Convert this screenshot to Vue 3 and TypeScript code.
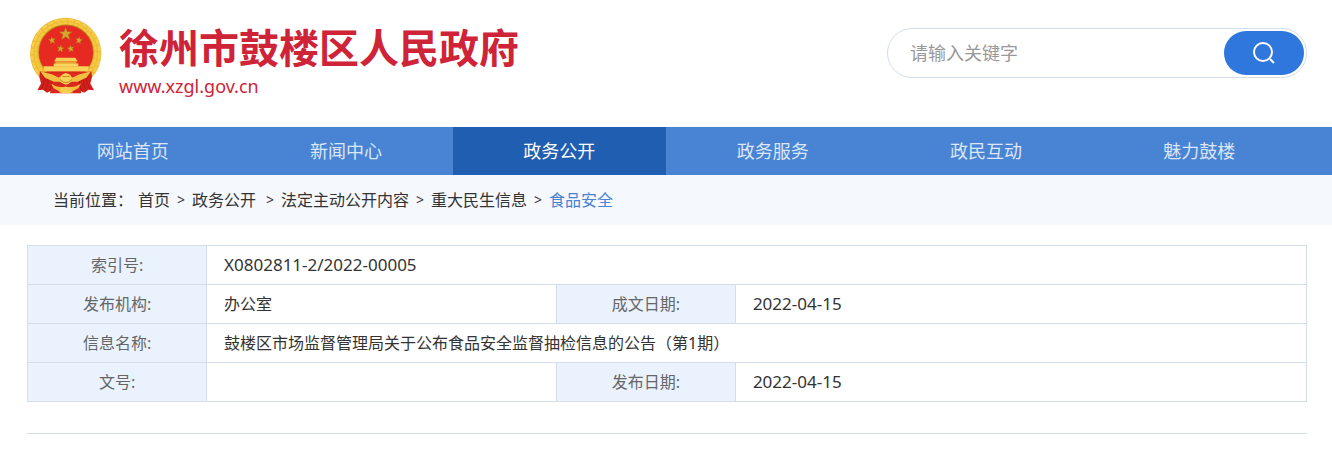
<script setup lang="ts">
import { ref } from 'vue'

interface NavItem {
  label: string
  active?: boolean
}

interface Crumb {
  label: string
  wide?: boolean
  current?: boolean
}

const keyword = ref('')

const navItems: NavItem[] = [
  { label: '网站首页' },
  { label: '新闻中心' },
  { label: '政务公开', active: true },
  { label: '政务服务' },
  { label: '政民互动' },
  { label: '魅力鼓楼' },
]

const crumbs: Crumb[] = [
  { label: '首页' },
  { label: '政务公开', wide: true },
  { label: '法定主动公开内容' },
  { label: '重大民生信息' },
  { label: '食品安全', current: true },
]
</script>

<template>
  <div class="page">
    <header class="header">
      <a class="brand" href="#">
        <svg class="emblem" viewBox="27 21 219 228" aria-hidden="true">
          <circle cx="137" cy="129" r="107" fill="#edbb35" />
          <circle cx="137" cy="129" r="101" fill="none" stroke="#f7ce48" stroke-width="7" stroke-dasharray="17 4" />
          <circle cx="137" cy="128" r="90" fill="none" stroke="#f5c942" stroke-width="7" stroke-dasharray="13 3" />
          <circle cx="138" cy="125" r="83" fill="#bd7f1e" />
          <circle cx="138" cy="126" r="81" fill="#e62a22" />
          <g fill="#d9a62c" stroke="#9d6416" stroke-width="1">
            <path d="M137 50l5 14h15l-12 9 5 15-13-9-13 9 5-15-12-9h15z" />
            <path d="M95 78l3 7 8-1-5 6 4 8-8-3-6 5 1-8-7-5 8-1z" />
            <path d="M178 78l-3 7-8-1 5 6-4 8 8-3 6 5-1-8 7-5-8-1z" />
            <path d="M123 103l-3 7-8-1 5 6-4 8 8-3 6 5-1-8 7-5-8-1z" />
            <path d="M151 103l3 7 8-1-5 6 4 8-8-3-6 5 1-8-7-5 8-1z" />
          </g>
          <path d="M109 142h57l7 11h-71z" fill="#f7cf55" />
          <path d="M106 153h63v7h-63z" fill="#e6a62d" />
          <path d="M101 159h74v9h-74z" fill="#f9d65d" />
          <path d="M70 167h137l-5 16H74z" fill="#f9d359" />
          <path d="M66 184h144v5H66z" fill="#d42a1d" />
          <path d="M60 182l27 7 29 11-8 48-15-7-12 6-12-9-17 1 11-20-5-20z" fill="#d3201b" />
          <path d="M214 182l-27 7-29 11 8 48 15-7 12 6 12-9 17 1-11-20 5-20z" fill="#d3201b" />
          <path d="M100 199h74l10 49h-94z" fill="#d9261e" />
          <g fill="none" stroke="#a31419" stroke-width="2">
            <path d="M69 193l6 17-10 25M83 198l1 20-9 23M97 204l-2 20-6 18" />
            <path d="M205 193l-6 17 10 25M191 198l-1 20 9 23M177 204l2 20 6 18" />
          </g>
          <path d="M61 182l36 10 19 9 21-13 21 13 19-9 36-10-13 19-27 13-17 0-19 8-19-8-17 0-27-13z" fill="#f0c040" />
          <circle cx="138" cy="205" r="17" fill="#f8d157" />
          <path d="M120 207q18 19 36 0M127 198h22" fill="none" stroke="#c48a25" stroke-width="3" />
          <path d="M93 219q20 15 45 9q25 6 45-9l-8 14-17 9-20-4-20 4-17-9z" fill="#f0bd3b" />
          <path d="M117 245l9-14h24l9 14q-21 6-42 0z" fill="#f6cc50" />
        </svg>
        <span class="brand-text">
          <strong class="brand-name">徐州市鼓楼区人民政府</strong>
          <span class="brand-url">www.xzgl.gov.cn</span>
        </span>
      </a>
      <form class="search" role="search" @submit.prevent>
        <input v-model="keyword" class="search-input" type="text" placeholder="请输入关键字" aria-label="请输入关键字" />
        <button class="search-button" type="submit" aria-label="搜索">
          <svg class="search-icon" viewBox="0 0 24 24" aria-hidden="true">
            <circle cx="11" cy="11" r="9" />
            <path d="M18 18l4 4" />
          </svg>
        </button>
      </form>
    </header>

    <nav class="nav">
      <div class="nav-list">
        <a
          v-for="item in navItems"
          :key="item.label"
          href="#"
          class="nav-link"
          :class="{ active: item.active }"
        >{{ item.label }}</a>
      </div>
    </nav>

    <div class="crumbs">
      <span class="crumbs-label">当前位置：</span>
      <template v-for="(crumb, i) in crumbs" :key="crumb.label">
        <a href="#" class="crumb" :class="{ current: crumb.current, wide: crumb.wide }">{{ crumb.label }}</a>
        <span v-if="i < crumbs.length - 1" class="separator">&gt;</span>
      </template>
    </div>

    <main class="content">
      <table class="info">
        <colgroup>
          <col class="col-label" />
          <col class="col-value" />
          <col class="col-label" />
          <col />
        </colgroup>
        <tbody>
          <tr>
            <th scope="row">索引号:</th>
            <td colspan="3" class="number">X0802811-2/2022-00005</td>
          </tr>
          <tr>
            <th scope="row">发布机构:</th>
            <td>办公室</td>
            <th scope="row">成文日期:</th>
            <td class="number">2022-04-15</td>
          </tr>
          <tr>
            <th scope="row">信息名称:</th>
            <td colspan="3">鼓楼区市场监督管理局关于公布食品安全监督抽检信息的公告（第1期）</td>
          </tr>
          <tr>
            <th scope="row">文号:</th>
            <td></td>
            <th scope="row">发布日期:</th>
            <td class="number">2022-04-15</td>
          </tr>
        </tbody>
      </table>
      <hr class="rule" />
    </main>
  </div>
</template>

<style>
body {
  margin: 0;
  background: #fff;
}
</style>

<style scoped>
.page {
  font-family: "Noto Sans", "Noto Sans CJK SC", sans-serif;
  font-size: 16px;
  line-height: 24px;
  color: #333;
}

a {
  color: inherit;
  text-decoration: none;
}

.header {
  display: flex;
  justify-content: space-between;
  align-items: flex-start;
  box-sizing: border-box;
  height: 127px;
  padding: 17px 25px 0 29px;
}

.brand {
  display: flex;
  gap: 17px;
  color: #cf2337;
}

.emblem {
  width: 73px;
  height: 77px;
}

.brand-text {
  display: flex;
  flex-direction: column;
  padding-top: 8px;
}

.brand-name {
  font-family: "Liberation Sans", "Noto Sans CJK SC", sans-serif;
  font-size: 40px;
  line-height: 48px;
  font-weight: 700;
}

.brand-url {
  font-size: 18px;
  line-height: 26px;
}

.search {
  display: flex;
  box-sizing: border-box;
  width: 420px;
  height: 50px;
  margin-top: 11px;
  padding: 2px;
  border: 1px solid #d3dee9;
  border-radius: 25px;
}

.search-input {
  flex: 1;
  min-width: 0;
  padding: 0 20px;
  border: 0;
  outline: 0;
  background: transparent;
  font-family: inherit;
  font-size: 18px;
  color: #333;
}

.search-input::placeholder {
  color: #999;
  opacity: 1;
}

.search-button {
  display: flex;
  align-items: center;
  justify-content: center;
  width: 80px;
  padding: 0;
  border: 0;
  border-radius: 22px;
  background: #2f77dd;
  cursor: pointer;
}

.search-icon {
  width: 24px;
  height: 24px;
  fill: none;
  stroke: #fff;
  stroke-width: 2;
}

.nav {
  padding: 0 26px;
  background: #4983d4;
}

.nav-list {
  display: grid;
  grid-template-columns: repeat(6, 1fr);
}

.nav-link {
  font-size: 18px;
  line-height: 48px;
  text-align: center;
  color: #dbe6f6;
}

.nav-link.active {
  background: #205eb2;
  color: #fff;
}

.crumbs {
  display: flex;
  padding: 0 53px;
  line-height: 50px;
  background: #f5f8fd;
}

.crumbs-label {
  margin-right: 5px;
}

.crumb.wide {
  margin-right: 3px;
}

.crumb.current {
  color: #4983d4;
}

.separator {
  width: 22px;
  font-size: 14px;
  text-align: center;
}

.content {
  padding: 20px 25px 17px 27px;
}

.info {
  width: 100%;
  table-layout: fixed;
  border-collapse: collapse;
}

.col-label {
  width: 14%;
}

.col-value {
  width: 27.35%;
}

.info th,
.info td {
  box-sizing: border-box;
  height: 39px;
  padding: 0 17px;
  border: 1px solid #d3dee9;
  font-weight: 400;
  text-align: left;
}

.info th {
  background: #eaf3fd;
  color: #666;
  text-align: center;
}

.info .number {
  font-size: 17px;
}

.rule {
  margin: 31px 0 0;
  border: 0;
  border-top: 1px solid #d3dee9;
}
</style>
